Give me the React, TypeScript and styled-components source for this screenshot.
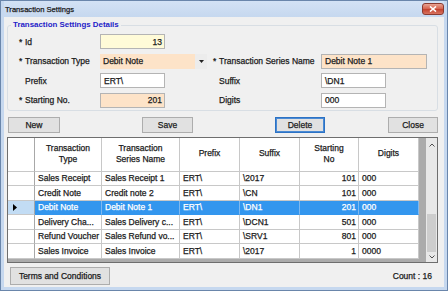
import styled, { createGlobalStyle } from 'styled-components'

const GlobalStyle = createGlobalStyle`
	html, body {
		margin: 0;
		padding: 0;
	}
	body {
		font-family: 'Liberation Sans', Arial, sans-serif;
		font-size: 8.5px;
		color: #1b1b1b;
		background: #ffffff;
		-webkit-text-stroke: 0.25px currentColor;
	}
	* {
		box-sizing: border-box;
	}
`

type RowType = {
	type: string
	series: string
	prefix: string
	suffix: string
	start: number
	digits: string
}

const TOTAL_ROWS = 16
const FIRST_VISIBLE = 10

const rows: RowType[] = [
	{ type: 'Sales Receipt', series: 'Sales Receipt 1', prefix: 'ERT\\', suffix: '\\2017', start: 101, digits: '000' },
	{ type: 'Credit Note', series: 'Credit note 2', prefix: 'ERT\\', suffix: '\\CN', start: 101, digits: '000' },
	{ type: 'Debit Note', series: 'Debit Note 1', prefix: 'ERT\\', suffix: '\\DN1', start: 201, digits: '000' },
	{ type: 'Delivery Cha...', series: 'Sales Delivery c...', prefix: 'ERT\\', suffix: '\\DCN1', start: 501, digits: '000' },
	{ type: 'Refund Voucher', series: 'Sales Refund vo...', prefix: 'ERT\\', suffix: '\\SRV1', start: 801, digits: '000' },
	{ type: 'Sales Invoice', series: 'Sales Invoice', prefix: 'ERT\\', suffix: '\\2017', start: 1, digits: '0000' },
]

const SELECTED = 2

const columns = [
	{ key: 'type', title: ['Transaction', 'Type'], width: 67 },
	{ key: 'series', title: ['Transaction', 'Series Name'], width: 78 },
	{ key: 'prefix', title: ['Prefix'], width: 60 },
	{ key: 'suffix', title: ['Suffix'], width: 60 },
	{ key: 'start', title: ['Starting', 'No'], width: 59, right: true },
	{ key: 'digits', title: ['Digits'], width: 60 },
] as const

const TRACK = 100

const App = () => {
	const thumbTop = (TRACK * FIRST_VISIBLE) / TOTAL_ROWS
	const thumbHeight = (TRACK * rows.length) / TOTAL_ROWS

	return (
		<>
			<GlobalStyle />
			<Window>
				<TitleBar>
					<Title>Transaction Settings</Title>
					<CloseBtn type='button'>
						<svg width='8' height='6' viewBox='0 0 8 6'>
							<path d='M1 0.5 L7 5.5 M7 0.5 L1 5.5' stroke='#ffffff' strokeWidth='1.6' />
						</svg>
					</CloseBtn>
				</TitleBar>
				<Body>
					<Group>
						<Legend>Transaction Settings Details</Legend>
						<FormGrid>
							<Label>
								<Star>*</Star>Id
							</Label>
							<Field $bg='#fffbd8' $align='right' $width={65}>
								13
							</Field>
							<span />
							<span />

							<Label>
								<Star>*</Star>Transaction Type
							</Label>
							<Combo>
								<ComboText>Debit Note</ComboText>
								<ComboArrow>
									<svg width='5' height='3' viewBox='0 0 5 3'>
										<path d='M0 0 H5 L2.5 3 Z' fill='#222222' />
									</svg>
								</ComboArrow>
							</Combo>
							<Label>
								<Star>*</Star>Transaction Series Name
							</Label>
							<Field $bg='#fde3c8' $width={106}>
								Debit Note 1
							</Field>

							<Label>
								<Star />Prefix
							</Label>
							<Field $width={65}>ERT\</Field>
							<Label>
								<Star />Suffix
							</Label>
							<Field $width={65}>\DN1</Field>

							<Label>
								<Star>*</Star>Starting No.
							</Label>
							<Field $bg='#fde3c8' $align='right' $width={65}>
								201
							</Field>
							<Label>
								<Star />Digits
							</Label>
							<Field $width={65}>000</Field>
						</FormGrid>
					</Group>

					<ButtonRow>
						<Button $width={52} $offset={1}>
							New
						</Button>
						<Button $width={51} $offset={82}>
							Save
						</Button>
						<Button $width={50} $offset={82} $focused>
							Delete
						</Button>
						<Button $width={50} $push>
							Close
						</Button>
					</ButtonRow>

					<DataGrid>
						<TableArea>
							<HeaderRow>
								<RowHeader />
								{columns.map((c) => (
									<HeaderCell key={c.key} $width={c.width}>
										{c.title.map((t) => (
											<span key={t}>{t}</span>
										))}
									</HeaderCell>
								))}
							</HeaderRow>
							{rows.map((r, i) => (
								<DataRow key={r.type + i}>
									<RowHeader $selected={i === SELECTED}>
										{i === SELECTED && (
											<svg width='4' height='7' viewBox='0 0 4 7'>
												<path d='M0 0 L4 3.5 L0 7 Z' fill='#000000' />
											</svg>
										)}
									</RowHeader>
									{columns.map((c) => (
										<Cell
											key={c.key}
											$width={c.width}
											$right={'right' in c}
											$selected={i === SELECTED}
										>
											{r[c.key]}
										</Cell>
									))}
								</DataRow>
							))}
						</TableArea>
						<ScrollBar>
							<ScrollArrow $h={14}>
								<svg width='6' height='4' viewBox='0 0 6 4'>
									<path d='M0.5 3.5 L3 1 L5.5 3.5' stroke='#505050' strokeWidth='1' fill='none' />
								</svg>
							</ScrollArrow>
							<Track>
								<Thumb style={{ top: thumbTop, height: thumbHeight }} />
							</Track>
							<ScrollArrow $h={10}>
								<svg width='6' height='4' viewBox='0 0 6 4'>
									<path d='M0.5 0.5 L3 3 L5.5 0.5' stroke='#505050' strokeWidth='1' fill='none' />
								</svg>
							</ScrollArrow>
						</ScrollBar>
					</DataGrid>

					<BottomRow>
						<Button $width={100} $height={18} $offset={3}>
							Terms and Conditions
						</Button>
						<Count>Count : {TOTAL_ROWS}</Count>
					</BottomRow>
				</Body>
			</Window>
		</>
	)
}

const Window = styled.div`
	width: 448px;
	height: 291px;
	display: flex;
	flex-direction: column;
	border: 1px solid #6a86ab;
	background: #c6d8ef;
	padding: 0 3px 3px;
`

const TitleBar = styled.div`
	height: 16px;
	display: flex;
	align-items: center;
	justify-content: space-between;
	padding-left: 1px;
	background: linear-gradient(#d3e2f5, #c6d8ef);
`

const Title = styled.div`
	font-size: 7.6px;
	color: #1a1a1a;
`

const CloseBtn = styled.button`
	width: 22px;
	height: 12px;
	padding: 0;
	display: flex;
	align-items: center;
	justify-content: center;
	border: 1px solid #8a3a30;
	border-radius: 3px;
	background: linear-gradient(#e9a493, #d5604b 50%, #c2402c 51%, #d8735f);
`

const Body = styled.div`
	flex: 1;
	display: flex;
	flex-direction: column;
	background: #f0f0f0;
	padding: 2px 6px 0 3px;
`

const Group = styled.fieldset`
	margin: 0;
	min-width: 0;
	padding: 3px 0 2px 11px;
	border: 1px solid #d8dee4;
	border-radius: 3px;
`

const Legend = styled.legend`
	margin-left: -8px;
	padding: 0 2px;
	line-height: 12px;
	font-size: 7.9px;
	font-weight: bold;
	color: #1e22c8;
	-webkit-text-stroke: 0;
`

const FormGrid = styled.div`
	display: grid;
	grid-template-columns: 81px 107px 114px 1fr;
	grid-template-rows: repeat(4, 15px);
	row-gap: 4.5px;
	column-gap: 0;
	& > :nth-child(4n + 3) {
		margin-left: 6px;
	}
`

const Label = styled.div`
	display: flex;
	align-items: center;
	white-space: nowrap;
	color: #1b1b1b;
`

const Star = styled.span`
	display: inline-block;
	width: 6px;
`

const Field = styled.div<{ $bg?: string; $align?: 'left' | 'right'; $width: number }>`
	width: ${(p) => p.$width}px;
	height: 15px;
	display: flex;
	align-items: center;
	justify-content: ${(p) => (p.$align === 'right' ? 'flex-end' : 'flex-start')};
	padding: 0 2px 0 3px;
	background: ${(p) => p.$bg || '#ffffff'};
	border: 1px solid #b4b4b4;
	white-space: nowrap;
`

const Combo = styled.div`
	width: 107px;
	height: 15px;
	display: flex;
`

const ComboText = styled.div`
	flex: 1;
	display: flex;
	align-items: center;
	padding-left: 3px;
	background: #fde3c8;
`

const ComboArrow = styled.div`
	width: 12px;
	display: flex;
	align-items: center;
	justify-content: center;
	background: #ececec;
`

const ButtonRow = styled.div`
	display: flex;
	margin-top: 6px;
`

const Button = styled.button<{
	$width: number
	$height?: number
	$offset?: number
	$push?: boolean
	$focused?: boolean
}>`
	width: ${(p) => p.$width}px;
	height: ${(p) => p.$height || 16}px;
	margin-left: ${(p) => (p.$push ? 'auto' : `${p.$offset || 0}px`)};
	padding: 0;
	font-family: inherit;
	font-size: 8.5px;
	color: #1b1b1b;
	-webkit-text-stroke: 0.25px currentColor;
	background: #e1e1e1;
	border: 1px solid ${(p) => (p.$focused ? '#2c72c4' : '#adadad')};
	box-shadow: ${(p) => (p.$focused ? 'inset 0 0 0 1px #4a8ad4' : 'none')};
`

const DataGrid = styled.div`
	height: 126px;
	margin-top: 4px;
	display: flex;
	border: 1px solid #6e6e6e;
`

const TableArea = styled.div`
	flex: 1;
	background: #ababab;
`

const HeaderRow = styled.div`
	display: flex;
	height: 34px;
`

const DataRow = styled.div`
	display: flex;
	height: 14.5px;
`

const RowHeader = styled.div<{ $selected?: boolean }>`
	width: 27px;
	display: flex;
	align-items: center;
	padding-left: 5px;
	background: ${(p) => (p.$selected ? '#c2dcf4' : '#ffffff')};
	border-right: 1px solid #a8a8a8;
	border-bottom: 1px solid #c8c8c8;
`

const HeaderCell = styled.div<{ $width: number }>`
	width: ${(p) => p.$width}px;
	display: flex;
	flex-direction: column;
	align-items: center;
	justify-content: center;
	line-height: 11.5px;
	background: #ffffff;
	border-right: 1px solid #c8c8c8;
	border-bottom: 1px solid #c8c8c8;
`

const Cell = styled.div<{ $width: number; $right?: boolean; $selected?: boolean }>`
	width: ${(p) => p.$width}px;
	display: flex;
	align-items: center;
	justify-content: ${(p) => (p.$right ? 'flex-end' : 'flex-start')};
	padding: 0 2px 0 3px;
	white-space: nowrap;
	overflow: hidden;
	color: ${(p) => (p.$selected ? '#ffffff' : '#1b1b1b')};
	background: ${(p) => (p.$selected ? '#3396ee' : '#ffffff')};
	border-right: 1px solid ${(p) => (p.$selected ? '#7db8f0' : '#c8c8c8')};
	border-bottom: 1px solid ${(p) => (p.$selected ? '#3396ee' : '#c8c8c8')};
`

const ScrollBar = styled.div`
	width: 11px;
	display: flex;
	flex-direction: column;
	background: #e8e8e8;
`

const ScrollArrow = styled.div<{ $h: number }>`
	height: ${(p) => p.$h}px;
	display: flex;
	align-items: center;
	justify-content: center;
`

const Track = styled.div`
	flex: 1;
	position: relative;
`

const Thumb = styled.div`
	position: absolute;
	left: 1px;
	right: 1px;
	background: #cdcdcd;
`

const BottomRow = styled.div`
	display: flex;
	align-items: center;
	justify-content: space-between;
	margin-top: 4px;
	padding-right: 6px;
`

const Count = styled.div`
	color: #1b1b1b;
`

export default App
